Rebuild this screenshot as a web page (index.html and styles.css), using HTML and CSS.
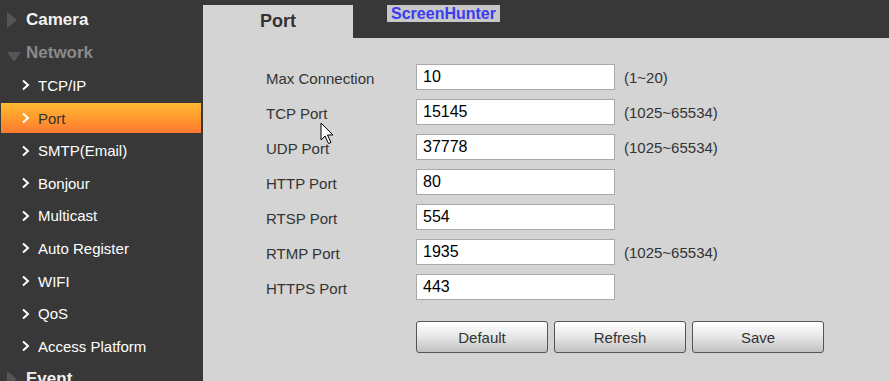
FILE: index.html
```html
<!DOCTYPE html>
<html lang="en">
<head>
  <meta charset="UTF-8" />
  <title>Port</title>
  <link rel="stylesheet" href="styles.css">
</head>
<body>
  <div id="page">
    <div id="sidebar">
      <div class="menu-head">
        <svg class="tri" width="20" height="20" viewBox="0 0 20 20"><path d="M6 4 16 12 6 20Z" fill="#555"/></svg>
        <span class="head-text">Camera</span>
      </div>
      <div class="menu-head open">
        <svg class="tri" width="20" height="20" viewBox="0 0 20 20"><path d="M6 11 20 11 13 21Z" fill="#555"/></svg>
        <span class="head-text">Network</span>
      </div>
      <div class="sub-item"><svg class="chev" width="10" height="12" viewBox="0 0 10 12"><path d="M2 1.5 7 6 2 10.5" fill="none" stroke="#fff" stroke-width="2"/></svg>TCP/IP</div>
      <div class="sub-item active"><svg class="chev" width="10" height="12" viewBox="0 0 10 12"><path d="M2 1.5 7 6 2 10.5" fill="none" stroke="#fff" stroke-width="2"/></svg>Port</div>
      <div class="sub-item"><svg class="chev" width="10" height="12" viewBox="0 0 10 12"><path d="M2 1.5 7 6 2 10.5" fill="none" stroke="#fff" stroke-width="2"/></svg>SMTP(Email)</div>
      <div class="sub-item"><svg class="chev" width="10" height="12" viewBox="0 0 10 12"><path d="M2 1.5 7 6 2 10.5" fill="none" stroke="#fff" stroke-width="2"/></svg>Bonjour</div>
      <div class="sub-item"><svg class="chev" width="10" height="12" viewBox="0 0 10 12"><path d="M2 1.5 7 6 2 10.5" fill="none" stroke="#fff" stroke-width="2"/></svg>Multicast</div>
      <div class="sub-item"><svg class="chev" width="10" height="12" viewBox="0 0 10 12"><path d="M2 1.5 7 6 2 10.5" fill="none" stroke="#fff" stroke-width="2"/></svg>Auto Register</div>
      <div class="sub-item"><svg class="chev" width="10" height="12" viewBox="0 0 10 12"><path d="M2 1.5 7 6 2 10.5" fill="none" stroke="#fff" stroke-width="2"/></svg>WIFI</div>
      <div class="sub-item"><svg class="chev" width="10" height="12" viewBox="0 0 10 12"><path d="M2 1.5 7 6 2 10.5" fill="none" stroke="#fff" stroke-width="2"/></svg>QoS</div>
      <div class="sub-item"><svg class="chev" width="10" height="12" viewBox="0 0 10 12"><path d="M2 1.5 7 6 2 10.5" fill="none" stroke="#fff" stroke-width="2"/></svg>Access Platform</div>
      <div class="menu-head">
        <svg class="tri" width="20" height="20" viewBox="0 0 20 20"><path d="M6 4 16 12 6 20Z" fill="#555"/></svg>
        <span class="head-text">Event</span>
      </div>
    </div>

    <div id="main">
      <div class="tab-bar">
        <div class="tab">Port</div>
        <div class="watermark">ScreenHunter</div>
      </div>

      <div class="form">
        <div class="row"><label>Max Connection</label><input type="text" value="10"><span class="hint">(1~20)</span></div>
        <div class="row"><label>TCP Port</label><input type="text" value="15145"><span class="hint">(1025~65534)</span></div>
        <div class="row"><label>UDP Port</label><input type="text" value="37778"><span class="hint">(1025~65534)</span></div>
        <div class="row"><label>HTTP Port</label><input type="text" value="80"></div>
        <div class="row"><label>RTSP Port</label><input type="text" value="554"></div>
        <div class="row"><label>RTMP Port</label><input type="text" value="1935"><span class="hint">(1025~65534)</span></div>
        <div class="row"><label>HTTPS Port</label><input type="text" value="443"></div>

        <div class="buttons">
          <button type="button">Default</button>
          <button type="button">Refresh</button>
          <button type="button">Save</button>
        </div>
      </div>

      <svg class="cursor" width="16" height="24" viewBox="0 0 16 24"><path d="M1 1 1 18 5 14 8.5 21.5 11 20.5 7.5 13 13 13Z" fill="#fff" stroke="#000" stroke-width="1" stroke-linejoin="round"/></svg>
    </div>
  </div>
</body>
</html>
```

FILE: styles.css
```css
* {margin:0;padding:0;box-sizing:border-box;font-family:"Liberation Sans", Arial, sans-serif}
body {background:#383838;width:889px;height:381px;overflow:hidden}
#page {display:flex;height:381px}

#sidebar {
  width:203px;flex-shrink:0;background:#383838;padding:4px 2px 0 1px;overflow:hidden;
  display:flex;flex-direction:column
}
.menu-head {
  height:32.6px;flex-shrink:0;display:flex;align-items:center;position:relative
}
.menu-head .tri {position:absolute;left:0;top:4px}
.head-text {margin-left:25px;font-size:17px;font-weight:bold;color:#f2f2f2}
.menu-head.open .head-text {color:#8a8a8a}

.sub-item {
  height:30.6px;flex-shrink:0;margin:1px 0;display:flex;align-items:center;
  font-size:15px;color:#fff;padding-left:20px
}
.sub-item .chev {margin-right:7px}
.sub-item.active {
  background:linear-gradient(180deg,#ffb932 0%,#ff9a2e 50%,#ff7831 100%);color:#333
}

#main {flex:1;background:#d4d4d4;position:relative}
.tab-bar {height:38px;background:#383838;padding-top:5px;display:flex}
.tab {
  width:150px;background:#d4d4d4;text-align:center;
  font-size:18px;font-weight:bold;color:#333;padding-top:6px
}
.watermark {
  position:absolute;left:184px;top:5px;width:113px;height:17px;background:#c8c8c8;
  color:#3b3bf2;font-size:16px;font-weight:bold;text-align:center;line-height:17px
}

.form {padding:26px 0 0 63px;display:flex;flex-direction:column}
.row {display:flex;align-items:center;height:26px;margin-bottom:9px}
.row label {width:150px;font-size:15px;color:#333;padding-top:3px}
.row input {
  width:199px;height:26px;border:1px solid #a9a9a9;background:#fff;
  font-size:16px;color:#000;padding:0 6px;outline:none
}
.hint {margin-left:9px;font-size:15px;color:#333}

.buttons {display:flex;gap:6px;margin:12px 0 0 150px}
.buttons button {
  width:132px;height:32px;border:1px solid #555;border-radius:3px;
  background:linear-gradient(180deg,#ffffff 0%,#e6e6e6 50%,#c2c2c2 100%);
  font-size:15px;color:#333;cursor:pointer
}

.cursor {position:absolute;left:117px;top:122px}
```
